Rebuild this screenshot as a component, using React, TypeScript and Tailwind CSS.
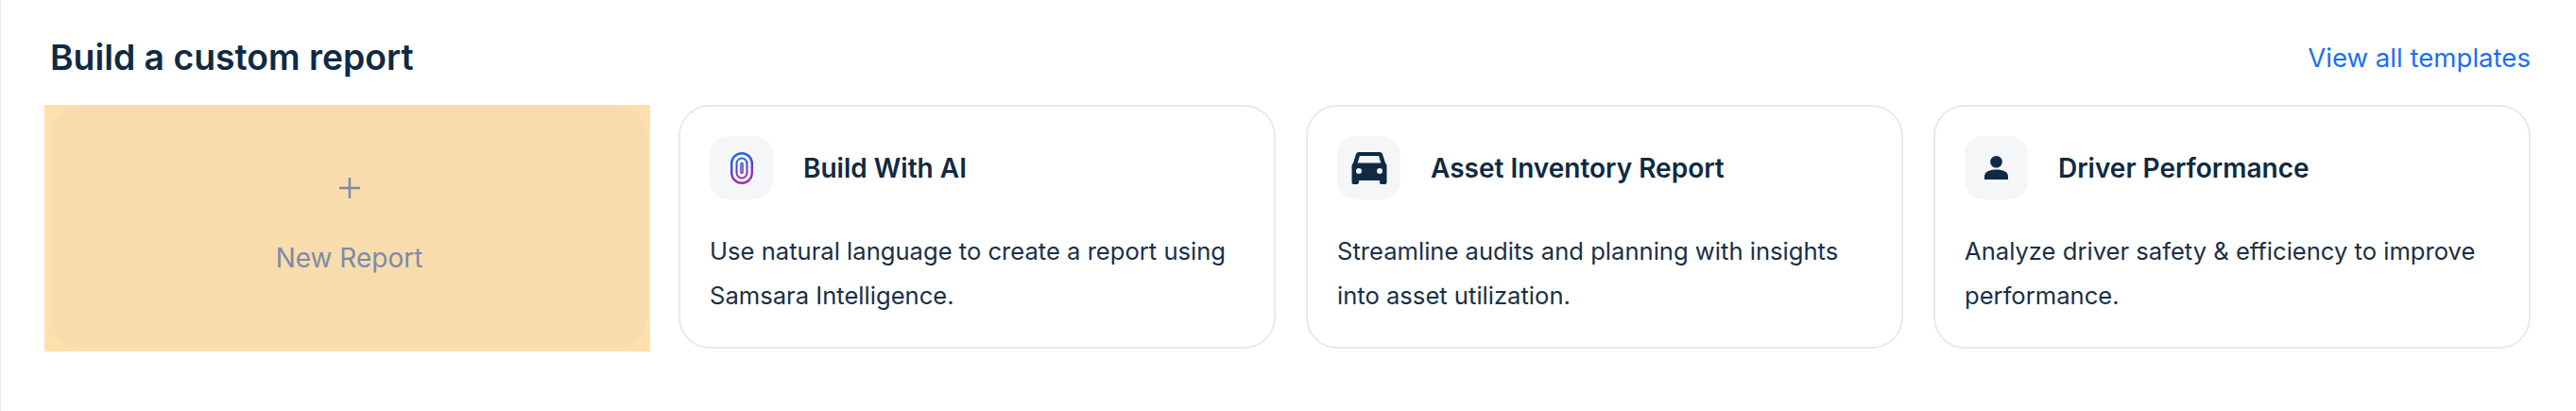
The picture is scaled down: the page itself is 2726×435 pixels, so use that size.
import React from "react";

const Box = ({ children }: { children: React.ReactNode }) => (
  <div className="flex h-[67px] w-[67px] shrink-0 items-center justify-center rounded-[20px] bg-[#f4f6f8]">{children}</div>
);

const Ai = () => (
  <svg width="24" height="34" viewBox="0 0 24 34" fill="none">
    <defs>
      <linearGradient id="g" x1="0" y1="0" x2="0.25" y2="1">
        <stop offset="0" stopColor="#1f6fe8" />
        <stop offset="0.55" stopColor="#4f46c8" />
        <stop offset="1" stopColor="#a12fa8" />
      </linearGradient>
    </defs>
    <rect x="1.200" y="1.200" width="21.600" height="31.600" rx="10.800" stroke="url(#g)" strokeWidth="2.400" />
    <rect x="6.500" y="6.500" width="11" height="21" rx="5.500" stroke="url(#g)" strokeWidth="2" />
    <rect x="11" y="11.500" width="2" height="11" rx="1" stroke="url(#g)" strokeWidth="1.500" />
  </svg>
);

const Car = () => (
  <svg width="38" height="34" viewBox="0 0 37 34" fill="#0f2a42">
    <path
      fillRule="evenodd"
      d="M7.500 0h22c1.400 0 2.500.8 3 2l3 9.500c.9.800 1.500 2 1.500 3.500v17c0 1-.8 2-2 2h-3.500c-1.200 0-2-1-2-2v-2H7.500v2c0 1-.8 2-2 2H2c-1.200 0-2-1-2-2V15c0-1.500.6-2.700 1.500-3.500L4.500 2c.5-1.200 1.600-2 3-2Zm.9 4L6.200 11.500h24.600L28.600 4H8.400ZM7.500 17a3 3 0 1 0 0 6 3 3 0 0 0 0-6Zm22 0a3 3 0 1 0 0 6 3 3 0 0 0 0-6Z"
    />
  </svg>
);

const Person = () => (
  <svg width="25" height="25" viewBox="0 0 25 25" fill="#0f2a42">
    <circle cx="12.500" cy="6.300" r="6.300" />
    <path d="M0 25v-3.500c0-4.500 5.500-7 12.500-7s12.500 2.500 12.500 7V25H0Z" />
  </svg>
);

const cards = [
  { icon: <Ai />, title: "Build With AI", lines: ["Use natural language to create a report using", "Samsara Intelligence."] },
  { icon: <Car />, title: "Asset Inventory Report", lines: ["Streamline audits and planning with insights", "into asset utilization."] },
  { icon: <Person />, title: "Driver Performance", lines: ["Analyze driver safety & efficiency to improve", "performance."] },
];

export default function App() {
  return (
    <div className="h-[435px] w-[2726px] overflow-hidden border-l border-[#e6e8ea] bg-white pl-[46px] pr-[48px] font-['Inter',sans-serif]">
      <div className="flex h-[111px] items-start justify-between pl-[6px] pt-[38px]">
        <h2 className="text-[37.300px] font-semibold leading-[46px] text-[#0f2a42]">Build a custom report</h2>
        <a className="text-[27.600px] leading-[46px] text-[#1a6ff0]">View all templates</a>
      </div>
      <div className="grid grid-cols-[639px_632px_632px_632px] gap-x-[32px]">
        <div className="flex h-[261px] w-[641px] bg-[#ffe0ad] pb-1 pl-[7px] pr-[3px]">
          <div className="flex w-full flex-col items-center rounded-[33px] bg-[#f8dcad] pt-[77px]">
            <svg width="22" height="22" viewBox="0 0 22 22" fill="none" stroke="#7d8ba8" strokeWidth="2.500">
              <path d="M11 0v22M0 11h22" />
            </svg>
            <span className="mt-[42px] text-[28px] leading-[42px] text-[#7d8ba8]">New Report</span>
          </div>
        </div>
        {cards.map((c) => (
          <div key={c.title} className="h-[258px] rounded-[33px] border-2 border-[#e8eaee] bg-white px-[31px] pt-[31px]">
            <div className="flex items-center gap-[32px]">
              <Box>{c.icon}</Box>
              <span className="text-[28px] font-semibold leading-[42px] text-[#0f2a42]">{c.title}</span>
            </div>
            <p className="mt-[31px] text-[25.600px] leading-[47px] text-[#1a2f47]">
              {c.lines[0]}
              <br />
              {c.lines[1]}
            </p>
          </div>
        ))}
      </div>
    </div>
  );
}
